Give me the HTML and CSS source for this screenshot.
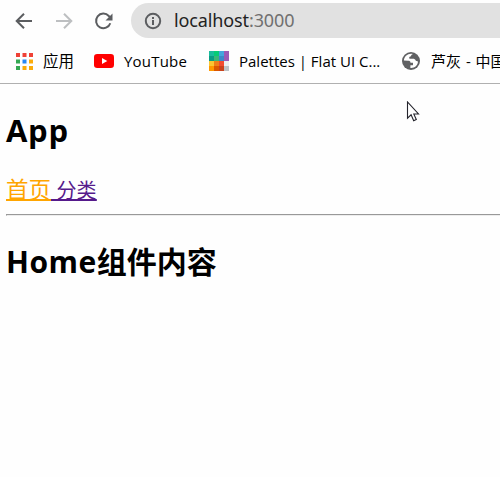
FILE: index.html
```html
<!DOCTYPE html>
<html lang="zh-CN">
<head>
<meta charset="utf-8">
<title>App</title>
<link rel="stylesheet" href="styles.css">
</head>
<body>
<header class="browser">
  <div class="toolbar">
    <svg class="nav" viewBox="0 0 20 20"><path d="M18 10H3M10 2.700L2.700 10l7.300 7.300"/></svg>
    <svg class="nav disabled" viewBox="0 0 20 20"><path d="M2 10h15M10 2.700l7.300 7.300-7.300 7.300"/></svg>
    <svg class="nav" viewBox="0 0 20 20"><path d="M16.300 12.200A7.300 7.300 0 1 1 14.800 5l1 1"/><path class="solid" d="M18.500 2.500v7h-7z"/></svg>
    <div class="address">
      <svg class="info" viewBox="0 0 18 18"><circle cx="9" cy="9" r="7.200"/><path d="M9 8v5M9 5v2"/></svg>
      <span class="url">localhost<span class="port">:3000</span></span>
    </div>
  </div>
  <nav class="bookmarks">
    <svg class="apps" viewBox="0 0 17 17"><path fill="#ef4136" d="M0 0h4v4H0zM6.500 0h4v4h-4zM13 0h4v4h-4z"/><path fill="#34a853" d="M0 6.500h4v4H0zM0 13h4v4H0z"/><path fill="#2787f5" d="M6.500 6.500h4v4h-4z"/><path fill="#fbab09" d="M13 6.500h4v4h-4zM6.500 13h4v4h-4zM13 13h4v4h-4z"/></svg>
    <span class="label label-apps">应用</span>
    <svg class="youtube" viewBox="0 0 20 14"><rect width="20" height="14" rx="3.200" fill="#f00"/><path fill="#fff" d="M8 4l5.300 3L8 10z"/></svg>
    <span class="label label-youtube">YouTube</span>
    <svg class="palette" viewBox="0 0 20 20" shape-rendering="crispEdges"><path fill="#1abc9c" d="M0 0h5v5H0z"/><path fill="#06cc77" d="M5 0h5v5H5z"/><path fill="#42a5dd" d="M10 0h5v5h-5z"/><path fill="#9b59b6" d="M15 0h5v10h-5z"/><path fill="#089c84" d="M0 5h5v5H0z"/><path fill="#3bb777" d="M5 5h5v5H5z"/><path fill="#3989c9" d="M10 5h5v5h-5z"/><path fill="#fbc531" d="M0 10h5v5H0z"/><path fill="#ee7f19" d="M5 10h5v5H5z"/><path fill="#f24c30" d="M10 10h5v5h-5z"/><path fill="#ecf0f1" d="M15 10h5v5h-5z"/><path fill="#ff9800" d="M0 15h5v5H0z"/><path fill="#dc5700" d="M5 15h5v5H5z"/><path fill="#c9431c" d="M10 15h5v5h-5z"/><path fill="#bdc3c7" d="M15 15h5v5h-5z"/></svg>
    <span class="label label-palette">Palettes | Flat UI C...</span>
    <svg class="globe" viewBox="0 0 18 18"><circle cx="9" cy="9" r="9" fill="#606163"/><path fill="#fff" d="M10.800 2C6 1 2 4.500 1.900 8.600L6 8.700c1.600 0 2.500.6 2.500 2H11v2.500H8.400v2.700c4 .4 7.200-2 7.600-6.300l-2.200-.8c-.5-1.600-1.500-2-3-2H7.500c-.8-1.500 0-2.600 1.500-2.600C9 2.900 10 2.600 10.800 2z"/></svg>
    <span class="label label-grey">芦灰 - 中国</span>
  </nav>
</header>
<main class="page">
  <h2 class="title title-app">App</h2>
  <div class="links"><a class="active" href="#home">首页</a><a class="visited" href="#category"> 分类</a></div>
  <hr class="rule">
  <h2 class="title"><span class="latin">Home</span>组件内容</h2>
</main>
<svg class="cursor" viewBox="0 0 14 21"><path d="M1.500 1v16.200l3.600-3.400 2.600 5.900 2.600-1.200-2.500-5.500h4.700z"/></svg>
</body>
</html>
```
FILE: styles.css
```css
* { box-sizing: border-box; }
body {
  margin: 0;
  height: 477px;
  overflow: hidden;
  background: #fefefe;
  color: #000;
  font-family: "Open Sans", "Noto Sans CJK SC", sans-serif;
}
svg { flex: none; }
.browser { height: 84px; border-bottom: 1px solid #b0b0b0; overflow: hidden; }
.toolbar { display: flex; align-items: center; height: 41px; padding-left: 14px; }
.nav { width: 20px; height: 20px; margin-right: 20px; fill: none; stroke: #5b5d60; stroke-width: 2; }
.nav.disabled { stroke: #bdbfc1; }
.nav .solid { fill: #5b5d60; stroke: none; }
.address {
  display: flex; align-items: center; flex: 1; height: 35px;
  margin-left: -3px; padding-left: 13px;
  border-radius: 18px 0 0 18px; background: #e1e1e1;
}
.info { width: 18px; height: 18px; margin-right: 12px; fill: none; stroke: #5b5d60; stroke-width: 2; }
.url { font-family: "Noto Sans", sans-serif; font-size: 18px; letter-spacing: -0.12px; line-height: 35px; color: #222; white-space: nowrap; }
.port { color: #707070; }
.bookmarks { display: flex; align-items: center; height: 40px; padding-left: 16px; white-space: nowrap; }
.label { flex: none; font-size: 15px; line-height: 24px; }
.apps { width: 17px; height: 17px; margin-right: 10px; }
.label-apps { width: 51px; font-size: 15.500px; }
.youtube { width: 20px; height: 14px; margin-right: 10px; }
.label-youtube { width: 85px; letter-spacing: 0.2px; }
.palette { width: 20px; height: 20px; margin-right: 10px; }
.label-palette { width: 163px; }
.globe { width: 18px; height: 18px; margin-right: 11px; }
.label-grey { word-spacing: 1px; }
.page { padding-left: 6px; }
.title { margin: 0; padding-top: 25px; height: 87px; font-size: 30px; line-height: 42px; font-weight: 700; }
.title-app { font-size: 31px; letter-spacing: 0.7px; }
.latin { letter-spacing: 0.5px; }
.links { height: 43px; font-size: 20px; line-height: 38px; white-space: pre; }
.links a { text-decoration-thickness: 2px; text-decoration-skip-ink: none; }
.active { color: orange; font-size: 22.500px; }
.visited { color: #551a8b; letter-spacing: 0.2px; }
.rule { margin: 0; height: 2px; border: solid; border-width: 1px 0 1px 1px; border-color: #999 transparent #ededed #999; }
.cursor { position: absolute; left: 406px; top: 101px; width: 14px; height: 21px; fill: #fff; stroke: #24242c; stroke-width: 1.100; }
```
